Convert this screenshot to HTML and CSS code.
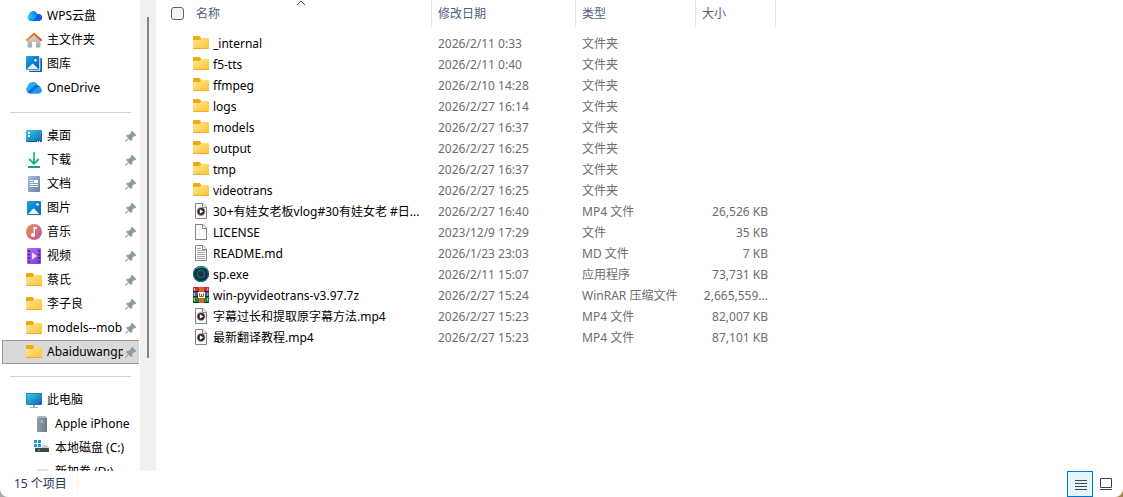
FILE: index.html
```html
<!DOCTYPE html>
<html lang="zh-CN">
<head>
<meta charset="utf-8">
<meta name="viewport" content="width=device-width, initial-scale=1">
<title>文件资源管理器</title>
<link rel="stylesheet" href="styles.css">
</head>
<body>
<svg class="sprite" aria-hidden="true">
  <defs>
    <linearGradient id="g-folder" x1="0" y1="0" x2="1" y2="1"><stop offset="0" stop-color="#ffe694"/><stop offset="1" stop-color="#fcc430"/></linearGradient>
    <linearGradient id="g-blue" x1="0" y1="0" x2="1" y2="1"><stop offset="0" stop-color="#1f9fe8"/><stop offset="1" stop-color="#0562ae"/></linearGradient>
    <linearGradient id="g-screen" x1="0" y1="0" x2="1" y2="1"><stop offset="0" stop-color="#35d0e4"/><stop offset="1" stop-color="#0d62b5"/></linearGradient>
    <linearGradient id="g-wps" x1="0" y1="0" x2="1" y2="0"><stop offset="0" stop-color="#2be3c8"/><stop offset=".45" stop-color="#17a8f4"/><stop offset="1" stop-color="#0a55f0"/></linearGradient>
    <linearGradient id="g-roof" x1="0" y1="0" x2="1" y2="0"><stop offset="0" stop-color="#f0902c"/><stop offset="1" stop-color="#d4541c"/></linearGradient>
    <linearGradient id="g-wall" x1="0" y1="0" x2="0" y2="1"><stop offset="0" stop-color="#dadada"/><stop offset="1" stop-color="#a4a4a4"/></linearGradient>
    <linearGradient id="g-doc" x1="0" y1="0" x2="1" y2="1"><stop offset="0" stop-color="#a9bdd2"/><stop offset="1" stop-color="#6584a6"/></linearGradient>
    <linearGradient id="g-music" x1="0" y1="0" x2="1" y2="1"><stop offset="0" stop-color="#f08f56"/><stop offset="1" stop-color="#b2589a"/></linearGradient>
    <linearGradient id="g-video" x1="0" y1="0" x2="1" y2="1"><stop offset="0" stop-color="#b46af2"/><stop offset="1" stop-color="#7f3bd6"/></linearGradient>
    <linearGradient id="g-tower" x1="0" y1="0" x2="1" y2="0"><stop offset="0" stop-color="#929ba2"/><stop offset="1" stop-color="#727c85"/></linearGradient>
    <linearGradient id="g-down" x1="0" y1="0" x2="0" y2="16" gradientUnits="userSpaceOnUse"><stop offset="0" stop-color="#2cc78e"/><stop offset="1" stop-color="#0c9b84"/></linearGradient>
    <linearGradient id="g-play" x1="0" y1="0" x2="1" y2="1"><stop offset="0" stop-color="#f28a2c"/><stop offset="1" stop-color="#6a5fd0"/></linearGradient>
    <radialGradient id="g-exe"><stop offset="0" stop-color="#1c5866"/><stop offset=".6" stop-color="#0d3340"/><stop offset="1" stop-color="#051e28"/></radialGradient>
  </defs>
  <symbol id="i-folder" viewBox="0 0 16 16">
    <path d="M0 2Q0 1 1 1H6.500L8 2.500V5H0Z" fill="#f2a90d"/>
    <path d="M0 5H6.500L8.500 3H15Q16 3 16 4V13Q16 14 15 14H1Q0 14 0 13Z" fill="url(#g-folder)"/>
    <path d="M.3 13.500H15.700" stroke="#e8b030" stroke-width="1"/>
  </symbol>
  <symbol id="i-wps" viewBox="0 0 16 16">
    <path d="M5 13A3.500 3.500 0 0 1 2.800 6.800A4.500 4.500 0 0 1 10.500 4.500L12 13Z" fill="url(#g-wps)"/>
    <path d="M4 13L10 7A3.600 3.600 0 1 1 11.800 13Z" fill="#0b5cf2"/>
    <path d="M4.500 13Q9.500 12.500 10 7L6 6.500L3 12.500Z" fill="#19a4f2"/>
  </symbol>
  <symbol id="i-home" viewBox="0 0 16 16">
    <path d="M1.500 8L8 2.500L14.500 8V14.500Q14.500 15.500 13.500 15.500H10V10H6V15.500H2.500Q1.500 15.500 1.500 14.500Z" fill="url(#g-wall)"/>
    <path d="M1 8L8 1.800L15 8" fill="none" stroke="url(#g-roof)" stroke-width="2" stroke-linecap="round" stroke-linejoin="round"/>
  </symbol>
  <symbol id="i-gallery" viewBox="0 0 16 16">
    <path d="M3 2H15Q16 2 16 3V15Q16 16 15 16H4Q3 16 3 15Z" fill="#0a5fa9"/>
    <rect width="14.300" height="14.800" rx="1" fill="#fff"/>
    <rect width="13.300" height="13.800" rx="1" fill="url(#g-blue)"/>
    <path d="M1 13L6.700 7.500L12.500 13Z" fill="#e7f5ff"/><circle cx="9.500" cy="4.200" r="1.200" fill="#fff"/>
  </symbol>
  <symbol id="i-onedrive" viewBox="0 0 16 16">
    <path d="M4 13.500A4 4 0 0 1 1.500 6.500A5.500 5.500 0 0 1 12 5.500A4.100 4.100 0 0 1 12 13.500Z" fill="#27aef5"/>
    <path d="M1.500 12L9 5.200Q12.500 4.500 14 7Q11.500 6.500 10 8L5 13.500Q2.500 13.500 1.500 12Z" fill="#1560dd"/>
    <path d="M5 13.500L10.500 8.200Q15.500 6.500 16 10.200Q15.500 13.500 12 13.500Z" fill="#2795f4"/>
  </symbol>
  <symbol id="i-desktop" viewBox="0 0 16 16">
    <rect y="2" width="16" height="12" rx="1" fill="url(#g-screen)"/>
    <path d="M2 4H4V6H2ZM2 7H4V9H2Z" fill="#fff"/><path d="M0 13H16V13.500Q16 14 15 14H1Q0 14 0 13Z" fill="#105998"/><path d="M11 13H12V14H11ZM13 13H14V14H13Z" fill="#fff"/>
  </symbol>
  <symbol id="i-download" viewBox="0 0 16 16">
    <path d="M8 0V11M3.200 7L8 11.800L12.800 7" fill="none" stroke="url(#g-down)" stroke-width="1.800"/>
    <path d="M2 14H14V16H2Z" fill="#12a587"/>
  </symbol>
  <symbol id="i-documents" viewBox="0 0 16 16">
    <rect x="2" width="12" height="16" rx="1" fill="url(#g-doc)"/>
    <path d="M4 4.500H7M4 6.500H7M4 8.500H12M4 10.500H12" stroke="#fff"/><rect x="8" y="4" width="4" height="3" fill="#fff"/>
  </symbol>
  <symbol id="i-pictures" viewBox="0 0 16 16">
    <rect x="1" y="1" width="14" height="14" rx="1" fill="url(#g-blue)"/>
    <path d="M2 14L7.500 8.200L13.500 14Z" fill="#e9f6ff"/><circle cx="11.500" cy="4.500" r="1.300" fill="#fff"/>
  </symbol>
  <symbol id="i-music" viewBox="0 0 16 16">
    <circle cx="8" cy="8" r="8" fill="url(#g-music)"/>
    <circle cx="7" cy="11" r="2.100" fill="#fff"/><path d="M7.500 3H10.800V5H9V11H7.500Z" fill="#fff"/>
  </symbol>
  <symbol id="i-video" viewBox="0 0 16 16">
    <rect x="1" width="14" height="16" rx="1" fill="url(#g-video)"/>
    <path d="M2 2H4V4H2ZM2 5.500H4V7.500H2ZM2 9H4V11H2ZM2 12.500H4V14.500H2ZM12 2H14V4H12ZM12 5.500H14V7.500H12ZM12 9H14V11H12ZM12 12.500H14V14.500H12Z" fill="#55289f"/>
    <path d="M6 4.500L11.200 8L6 11.500Z" fill="#f1dfff"/>
  </symbol>
  <symbol id="i-pc" viewBox="0 0 16 16">
    <path d="M7 12H9V15H12V16H4V15H7Z" fill="#a5afb7"/>
    <rect y="1" width="16" height="12" rx="1" fill="#25719f"/><rect x=".7" y="1.700" width="14.600" height="10.600" fill="url(#g-screen)"/>
  </symbol>
  <symbol id="i-phone" viewBox="0 0 16 16">
    <path d="M4 0H12L13 2H3Z" fill="#aab4bb"/><rect x="3" y="2" width="10" height="14" fill="url(#g-tower)"/>
    <circle cx="8" cy="5.500" r="1.400" fill="#3fe3ee"/>
  </symbol>
  <symbol id="i-disk" viewBox="0 0 16 16">
    <path d="M0 0H3V3H0ZM4 0H7V3H4ZM0 4H3V7H0ZM4 4H7V7H4Z" fill="#1a9be0"/>
    <path d="M8 5H13L15 8H1L2 7.500H8Z" fill="#c8cbcd"/><rect x="1" y="8" width="14" height="4" rx=".5" fill="#414648"/><path d="M4 9.500H6V10.500H4Z" fill="#3be36c"/>
  </symbol>
  <symbol id="i-disk-plain" viewBox="0 0 16 16">
    <path d="M4 5H13L15 8H1Z" fill="#dddfe0"/><rect x="1" y="8" width="14" height="4" fill="#414648"/>
  </symbol>
  <symbol id="i-pin" viewBox="0 0 12 12">
    <path d="M7 1L11 5L10 6L9 5.800L7 8L6.800 10L6 10.800L3.500 8.500L1 11.500L.5 11L3.500 8L1.200 6L2 5.200L4.200 5L6.200 3L6 2Z" fill="#8f9ba4" stroke="#8f9ba4" stroke-width=".6" stroke-linejoin="round"/>
  </symbol>
  <symbol id="i-file" viewBox="0 0 16 16">
    <path d="M2.500 .5H10L13.500 4V15.500H2.500Z" fill="#f9f9f9" stroke="#858585"/><path d="M9.500 .8V4.500H13.300" fill="#fff" stroke="#858585"/>
  </symbol>
  <symbol id="i-text" viewBox="0 0 16 16">
    <use href="#i-file"/><path d="M4 3.500H8M4 5.500H12M4 7.500H12M4 9.500H12M4 11.500H12M4 13.500H12" stroke="#aaa"/>
  </symbol>
  <symbol id="i-mp4" viewBox="0 0 16 16">
    <use href="#i-file"/><circle cx="8" cy="8.500" r="4.200" fill="url(#g-play)"/><circle cx="8" cy="8.500" r="3.400" fill="#2b2930"/><path d="M6.800 6.200L10.400 8.500L6.800 10.800Z" fill="#fff"/>
  </symbol>
  <symbol id="i-exe" viewBox="0 0 16 16">
    <circle cx="8" cy="8" r="8" fill="url(#g-exe)"/><circle cx="8" cy="8" r="7.300" fill="none" stroke="#0f737a" stroke-width="1.200"/>
    <path d="M3 2.500Q8-.8 13 2.500" fill="none" stroke="#27a8a2" stroke-width="1.200"/>
    <circle cx="8" cy="8" r="4" fill="#174450" stroke="#2a6675"/>
    <circle cx="8" cy="8" r="2" fill="#123641"/>
  </symbol>
  <symbol id="i-rar" viewBox="0 0 16 16">
    <path d="M0 0H16V5H0Z" fill="#c92c55"/><path d="M0 5H16V10H0Z" fill="#4b54ac"/><path d="M0 10H16V16H0Z" fill="#14893a"/>
    <path d="M0 4.500H16M0 9.500H16M0 15.500H16" stroke="#25232c"/><path d="M1.500 1V4M1.500 6V9M1.500 11V14" stroke="#ebca38"/><path d="M14.500 1V4M14.500 6V9M14.500 11V14" stroke="#fff" opacity=".4"/>
    <path d="M6 0H11V16H6Z" fill="#d36820"/><path d="M5 5H12V11H5Z" fill="#fff"/><path d="M6.500 6V9.500H8.500V7V9.500H10.500V6" fill="none" stroke="#c2502a"/>
  </symbol>
</svg>

<div class="window">
  <div class="workspace">
    <aside class="sidebar">
      <nav class="tree" aria-label="导航窗格">
        <a class="node" href="#"><svg class="icon"><use href="#i-wps"/></svg><span class="label">WPS云盘</span></a>
        <a class="node" href="#"><svg class="icon"><use href="#i-home"/></svg><span class="label">主文件夹</span></a>
        <a class="node" href="#"><svg class="icon"><use href="#i-gallery"/></svg><span class="label">图库</span></a>
        <a class="node" href="#"><svg class="icon"><use href="#i-onedrive"/></svg><span class="label">OneDrive</span></a>
        <hr class="divider">
        <a class="node" href="#"><svg class="icon"><use href="#i-desktop"/></svg><span class="label">桌面</span><svg class="pin"><use href="#i-pin"/></svg></a>
        <a class="node" href="#"><svg class="icon"><use href="#i-download"/></svg><span class="label">下载</span><svg class="pin"><use href="#i-pin"/></svg></a>
        <a class="node" href="#"><svg class="icon"><use href="#i-documents"/></svg><span class="label">文档</span><svg class="pin"><use href="#i-pin"/></svg></a>
        <a class="node" href="#"><svg class="icon"><use href="#i-pictures"/></svg><span class="label">图片</span><svg class="pin"><use href="#i-pin"/></svg></a>
        <a class="node" href="#"><svg class="icon"><use href="#i-music"/></svg><span class="label">音乐</span><svg class="pin"><use href="#i-pin"/></svg></a>
        <a class="node" href="#"><svg class="icon"><use href="#i-video"/></svg><span class="label">视频</span><svg class="pin"><use href="#i-pin"/></svg></a>
        <a class="node" href="#"><svg class="icon"><use href="#i-folder"/></svg><span class="label">蔡氏</span><svg class="pin"><use href="#i-pin"/></svg></a>
        <a class="node" href="#"><svg class="icon"><use href="#i-folder"/></svg><span class="label">李子良</span><svg class="pin"><use href="#i-pin"/></svg></a>
        <a class="node" href="#"><svg class="icon"><use href="#i-folder"/></svg><span class="label">models--mob</span><svg class="pin"><use href="#i-pin"/></svg></a>
        <a class="node selected" href="#" aria-current="true"><svg class="icon"><use href="#i-folder"/></svg><span class="label">Abaiduwangp</span><svg class="pin"><use href="#i-pin"/></svg></a>
        <hr class="divider">
        <a class="node" href="#"><svg class="icon"><use href="#i-pc"/></svg><span class="label">此电脑</span></a>
        <a class="node child" href="#"><svg class="icon"><use href="#i-phone"/></svg><span class="label">Apple iPhone</span></a>
        <a class="node child" href="#"><svg class="icon"><use href="#i-disk"/></svg><span class="label">本地磁盘 (C:)</span></a>
        <a class="node child" href="#"><svg class="icon"><use href="#i-disk-plain"/></svg><span class="label">新加卷 (D:)</span></a>
      </nav>
      <div class="scrollbar"><div class="thumb"></div></div>
    </aside>

    <main class="content">
      <table class="files">
        <colgroup><col class="col-name"><col class="col-date"><col class="col-type"><col class="col-size"></colgroup>
        <thead>
          <tr>
            <th aria-sort="ascending">
              <div class="name-head">
                <input class="check" type="checkbox" aria-label="全选">
                <button class="sort" type="button">名称</button>
                <svg class="arrow" viewBox="0 0 10 6"><path d="M1 5L5 1L9 5" fill="none" stroke="#555"/></svg>
              </div>
            </th>
            <th><button class="sort" type="button">修改日期</button></th>
            <th><button class="sort" type="button">类型</button></th>
            <th><button class="sort" type="button">大小</button></th>
          </tr>
        </thead>
        <tbody>
          <tr><td><div class="file"><svg class="icon"><use href="#i-folder"/></svg><span class="filename">_internal</span></div></td><td>2026/2/11 0:33</td><td>文件夹</td><td></td></tr>
          <tr><td><div class="file"><svg class="icon"><use href="#i-folder"/></svg><span class="filename">f5-tts</span></div></td><td>2026/2/11 0:40</td><td>文件夹</td><td></td></tr>
          <tr><td><div class="file"><svg class="icon"><use href="#i-folder"/></svg><span class="filename">ffmpeg</span></div></td><td>2026/2/10 14:28</td><td>文件夹</td><td></td></tr>
          <tr><td><div class="file"><svg class="icon"><use href="#i-folder"/></svg><span class="filename">logs</span></div></td><td>2026/2/27 16:14</td><td>文件夹</td><td></td></tr>
          <tr><td><div class="file"><svg class="icon"><use href="#i-folder"/></svg><span class="filename">models</span></div></td><td>2026/2/27 16:37</td><td>文件夹</td><td></td></tr>
          <tr><td><div class="file"><svg class="icon"><use href="#i-folder"/></svg><span class="filename">output</span></div></td><td>2026/2/27 16:25</td><td>文件夹</td><td></td></tr>
          <tr><td><div class="file"><svg class="icon"><use href="#i-folder"/></svg><span class="filename">tmp</span></div></td><td>2026/2/27 16:37</td><td>文件夹</td><td></td></tr>
          <tr><td><div class="file"><svg class="icon"><use href="#i-folder"/></svg><span class="filename">videotrans</span></div></td><td>2026/2/27 16:25</td><td>文件夹</td><td></td></tr>
          <tr><td><div class="file"><svg class="icon"><use href="#i-mp4"/></svg><span class="filename">30+有娃女老板vlog#30有娃女老 #日...</span></div></td><td>2026/2/27 16:40</td><td>MP4 文件</td><td>26,526 KB</td></tr>
          <tr><td><div class="file"><svg class="icon"><use href="#i-file"/></svg><span class="filename">LICENSE</span></div></td><td>2023/12/9 17:29</td><td>文件</td><td>35 KB</td></tr>
          <tr><td><div class="file"><svg class="icon"><use href="#i-text"/></svg><span class="filename">README.md</span></div></td><td>2026/1/23 23:03</td><td>MD 文件</td><td>7 KB</td></tr>
          <tr><td><div class="file"><svg class="icon"><use href="#i-exe"/></svg><span class="filename">sp.exe</span></div></td><td>2026/2/11 15:07</td><td>应用程序</td><td>73,731 KB</td></tr>
          <tr><td><div class="file"><svg class="icon"><use href="#i-rar"/></svg><span class="filename">win-pyvideotrans-v3.97.7z</span></div></td><td>2026/2/27 15:24</td><td>WinRAR 压缩文件</td><td>2,665,559...</td></tr>
          <tr><td><div class="file"><svg class="icon"><use href="#i-mp4"/></svg><span class="filename">字幕过长和提取原字幕方法.mp4</span></div></td><td>2026/2/27 15:23</td><td>MP4 文件</td><td>82,007 KB</td></tr>
          <tr><td><div class="file"><svg class="icon"><use href="#i-mp4"/></svg><span class="filename">最新翻译教程.mp4</span></div></td><td>2026/2/27 15:23</td><td>MP4 文件</td><td>87,101 KB</td></tr>
        </tbody>
      </table>
    </main>
  </div>

  <footer class="status">
    <span class="count">15 个项目</span>
    <div class="views">
      <button class="view active" type="button" aria-label="详细信息" aria-pressed="true"><svg class="icon" viewBox="0 0 16 16"><path d="M3 4.500H15M3 7.500H15M3 10.500H15M3 13.500H15" stroke="#444"/></svg></button>
      <button class="view" type="button" aria-label="大缩略图" aria-pressed="false"><svg class="icon" viewBox="0 0 16 16"><path d="M2.500 2.500H13.500V11.500H2.500ZM2 13.500H14" fill="none" stroke="#444"/></svg></button>
    </div>
  </footer>
</div>
</body>
</html>
```

FILE: styles.css
```css
* {
  box-sizing: border-box;
}

body {
  margin: 0;
  background: linear-gradient(90deg, #a8a8a8 50%, #a58350 50%);
  font-family: "Noto Sans", "Noto Sans CJK SC", sans-serif;
  font-size: 12px;
  line-height: 20px;
  color: #000;
}

button {
  font: inherit;
  color: inherit;
  background: none;
  border: 0;
  padding: 0;
}

.sprite {
  position: absolute;
  width: 0;
  height: 0;
}

.icon {
  flex: none;
  width: 16px;
  height: 16px;
}

.window {
  display: flex;
  flex-direction: column;
  height: 100vh;
  overflow: hidden;
  background: #fff;
  border-radius: 0 0 8px 8px;
}

.workspace {
  display: flex;
  flex: 1;
  min-height: 0;
}

/* Navigation pane */
.sidebar {
  display: flex;
  flex: none;
  width: 156px;
}

.tree {
  flex: 1;
  min-width: 0;
  padding-top: 4px;
  overflow: hidden;
}

.node {
  display: flex;
  align-items: center;
  height: 24px;
  margin: 0 1px 0 2px;
  padding: 0 2px 0 24px;
  color: inherit;
  text-decoration: none;
  white-space: nowrap;
}

.node .label {
  flex: 1;
  min-width: 0;
  margin-left: 5px;
  overflow: hidden;
}

.node.child {
  padding-left: 32px;
}

.node.selected {
  padding-left: 23px;
  background: #d9d9d9;
  border: 1px solid #999;
  border-right: 0;
}

.pin {
  flex: none;
  width: 12px;
  height: 12px;
  margin-left: 2px;
}

.divider {
  height: 1px;
  margin: 12px 9px 11px 10px;
  background: #d2d2d2;
  border: 0;
}

.scrollbar {
  display: flex;
  justify-content: center;
  width: 16px;
  padding-top: 17px;
  background: #f0f0f0;
}

.thumb {
  width: 2px;
  height: 75%;
  background: #858585;
}

/* File list */
.content {
  flex: 1;
  min-width: 0;
  overflow: hidden;
}

.files {
  width: 620px;
  table-layout: fixed;
  border-collapse: separate;
  border-spacing: 0;
}

.col-name {
  width: 276px;
}

.col-date {
  width: 144px;
}

.col-type {
  width: 120px;
}

.col-size {
  width: 80px;
}

.files th {
  height: 27px;
  padding: 0 6px;
  border-right: 1px solid #e5e5e5;
  color: #4c607a;
  font-weight: 400;
  text-align: left;
}

.files th:first-child {
  padding: 0 0 0 15px;
}

.files thead::after {
  content: "";
  display: block;
  height: 6px;
}

.name-head {
  position: relative;
  display: flex;
  align-items: center;
  gap: 12px;
}

.check {
  appearance: none;
  width: 13px;
  height: 13px;
  margin: 0;
  background: #f5f5f5;
  border: 1px solid #626262;
  border-radius: 3px;
}

.arrow {
  position: absolute;
  top: -4px;
  left: 50%;
  width: 10px;
  height: 6px;
  margin-left: -5px;
}

.files td {
  height: 21px;
  padding: 0 6px;
  color: #6d6d6d;
  line-height: 21px;
  white-space: nowrap;
}

.files td:first-child {
  padding-left: 37px;
}

.files td:last-child {
  padding: 0 8px 0 0;
  text-align: right;
}

.file {
  display: flex;
  align-items: flex-start;
  gap: 4px;
  color: #000;
}

.file .icon {
  margin-top: 2px;
}

.filename {
  overflow: hidden;
  text-overflow: ellipsis;
}

/* Status bar */
.status {
  display: flex;
  flex: none;
  align-items: center;
  justify-content: space-between;
  height: 26px;
  padding: 0 4px 0 14px;
  color: #1e395b;
}

.count {
  padding-right: 10px;
  border-right: 1px solid #f3f3f3;
  line-height: 16px;
}

.views {
  display: flex;
}

.view {
  display: flex;
  align-items: center;
  justify-content: center;
  width: 26px;
  height: 26px;
}

.view.active {
  background: #e5f3fb;
  border: 1px solid #0078d7;
}
```
